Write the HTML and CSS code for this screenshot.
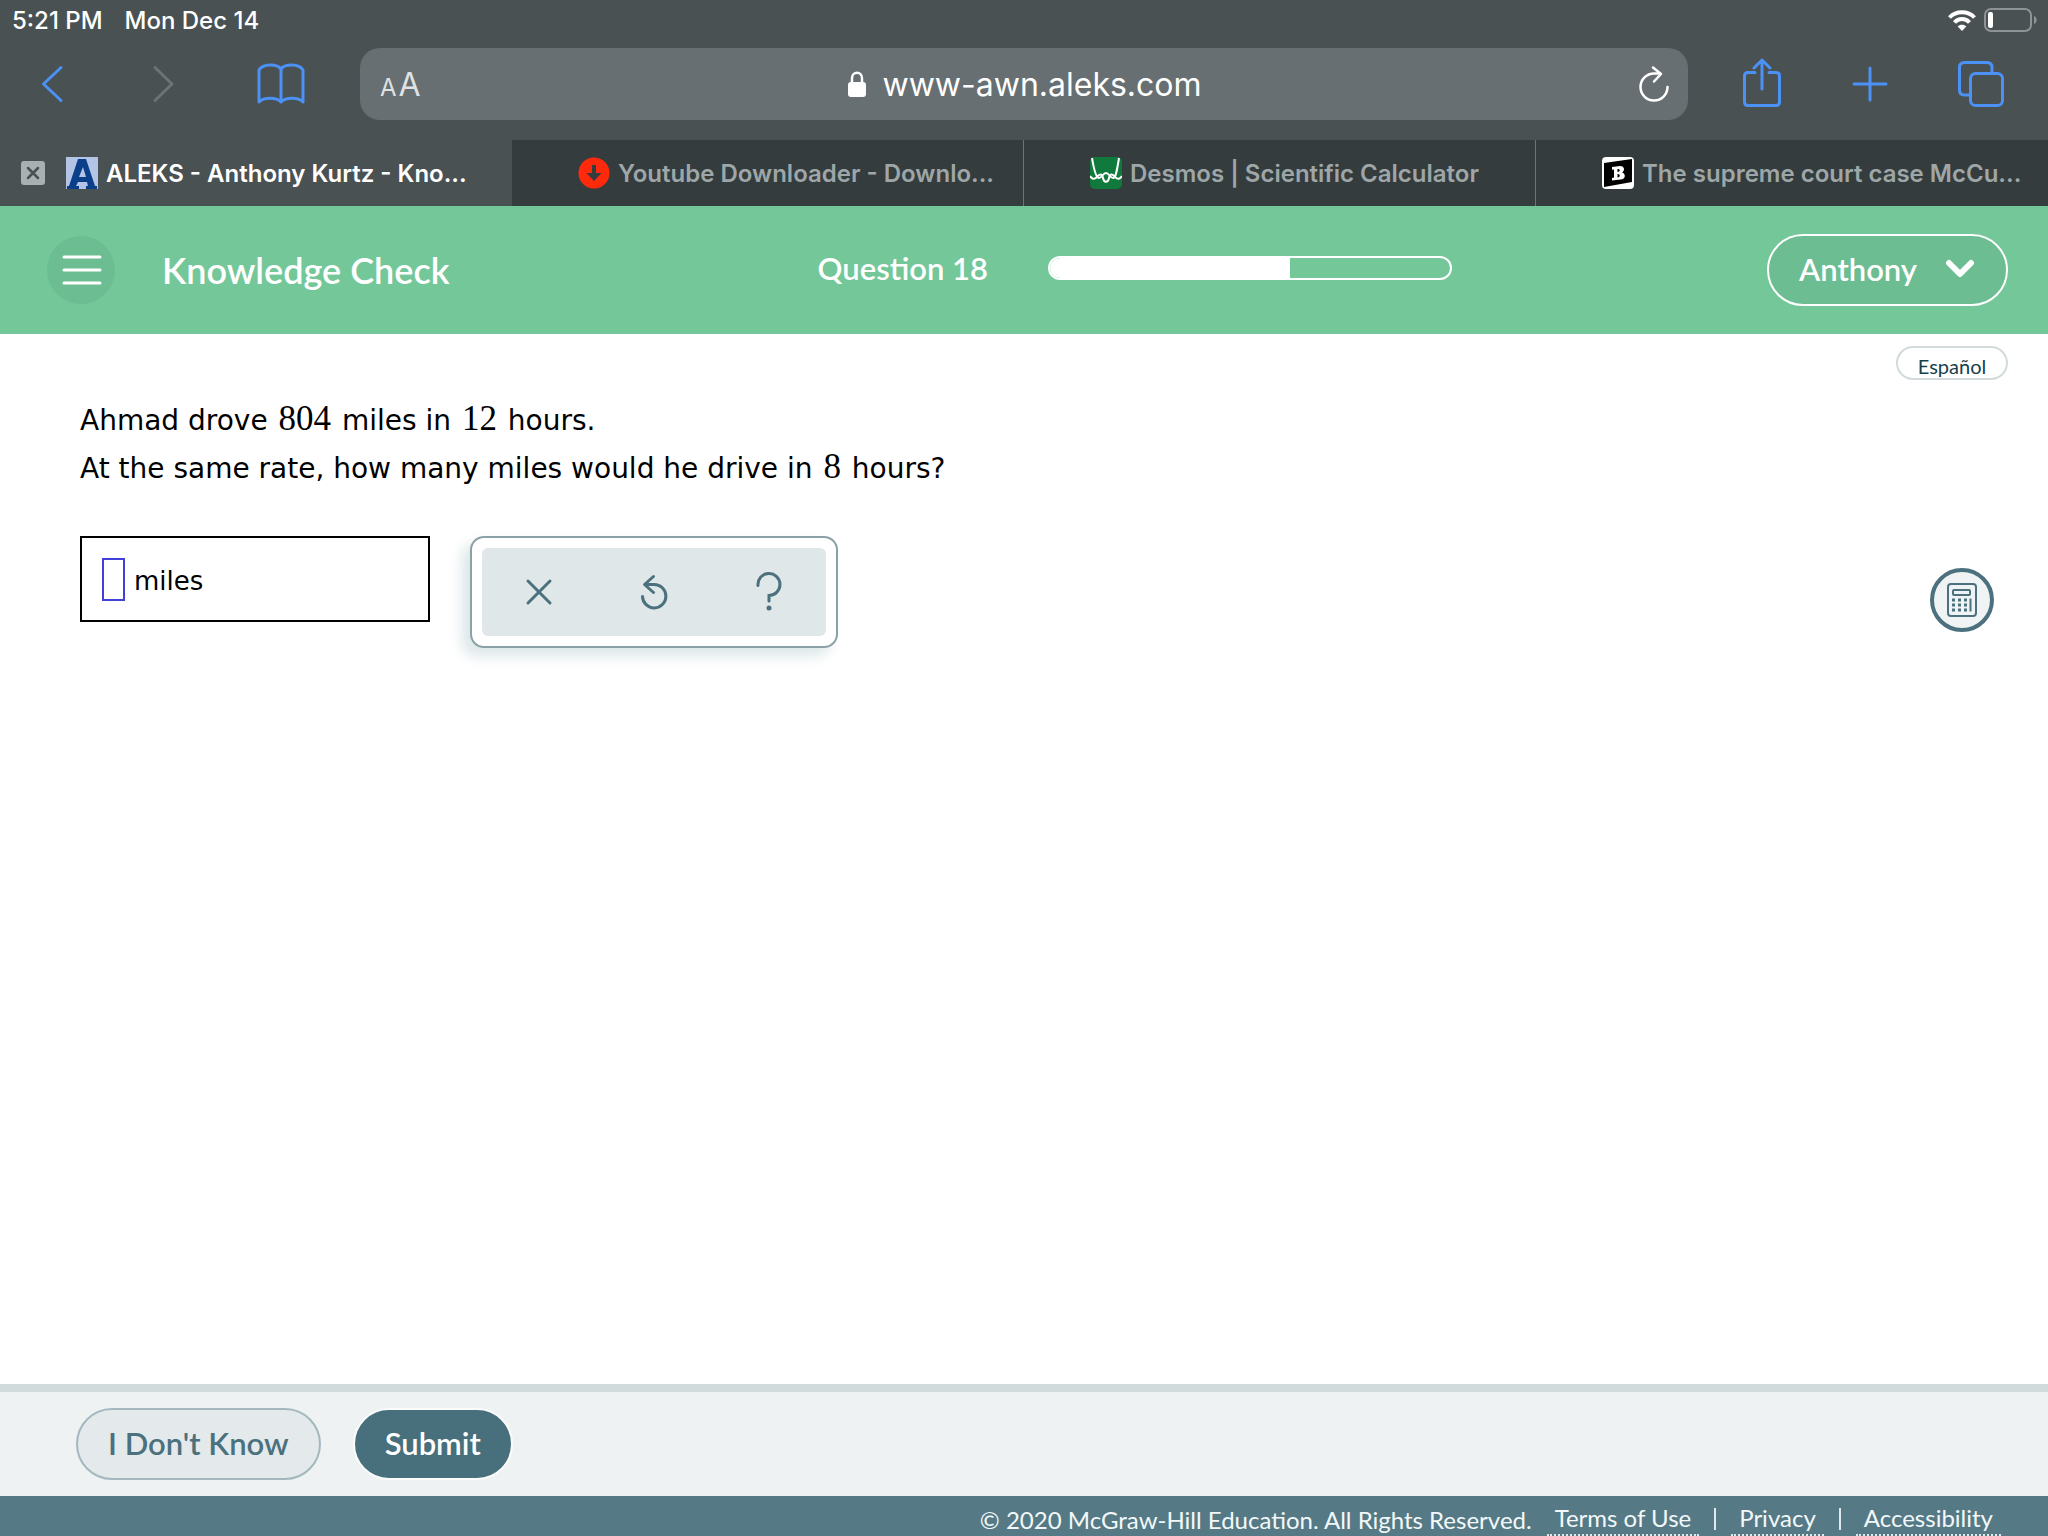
FILE: index.html
```html
<!DOCTYPE html>
<html lang="en">
<head>
<meta charset="utf-8">
<meta name="viewport" content="width=device-width, initial-scale=1">
<title>ALEKS - Anthony Kurtz - Knowledge Check</title>
<link rel="stylesheet" href="styles.css">
</head>
<body>
<div class="browser">
  <div class="status">
    <span>5:21 PM</span>
    <span>Mon Dec 14</span>
    <span class="status-icons">
      <svg width="28" height="22" viewBox="0 0 28 22" fill="none" stroke="#fff" stroke-width="4"><path d="M1.500 8.500C8 1.500 20 1.500 26.500 8.500"/><path d="M6.500 13.500c4-4.600 11-4.600 15 0"/><path d="M9.700 17.500c2-2.500 6.600-2.500 8.600 0L14 22z" fill="#fff" stroke="none"/></svg>
      <svg width="54" height="24" viewBox="0 0 54 24"><rect x="1" y="1" width="46" height="22" rx="6" fill="none" stroke="#8e9395" stroke-width="2"/><rect x="4" y="4" width="5" height="16" rx="2" fill="#fff"/><path d="M50 8c3.500 1 3.500 7 0 8z" fill="#8e9395"/></svg>
    </span>
  </div>
  <div class="toolbar">
    <div class="nav-left">
      <button class="icon-btn" aria-label="Back"><svg width="24" height="40" viewBox="0 0 24 40" fill="none" stroke="#4c91f5" stroke-width="3" stroke-linecap="round" stroke-linejoin="round"><path d="M21 3.500 3.500 20 21 36.500"/></svg></button>
      <button class="icon-btn" aria-label="Forward"><svg width="24" height="40" viewBox="0 0 24 40" fill="none" stroke="#6c7275" stroke-width="3" stroke-linecap="round" stroke-linejoin="round"><path d="M4 3.500 21 20 4 36.500"/></svg></button>
      <button class="icon-btn" aria-label="Bookmarks"><svg width="48" height="42" viewBox="0 0 48 42" fill="none" stroke="#4c91f5" stroke-width="3" stroke-linejoin="round"><path d="M2 39V7C6 .500 20 .500 24 6c4-5.500 18-5.500 22 1v32c-5-5-17-5-22 0-5-5-17-5-22 0z"/><path d="M24 6v33"/></svg></button>
    </div>
    <div class="address">
      <button class="text-size" aria-label="Text size"><span class="small-a">A</span><span>A</span></button>
      <a class="url" href="#"><svg width="18" height="26" viewBox="0 0 18 26"><rect y="11" width="18" height="15" rx="3" fill="#fff"/><path d="M4 12V7c0-7 10-7 10 0v5" fill="none" stroke="#fff" stroke-width="2.500"/></svg>www-awn.aleks.com</a>
      <button class="icon-btn reload" aria-label="Reload"><svg width="32" height="38" viewBox="0 0 32 38" fill="none" stroke="#fff" stroke-width="2.500" stroke-linecap="round" stroke-linejoin="round"><path d="M29.500 22A13.500 13.500 0 1 1 16 8.500h6"/><path d="m15 2.500 8 6.500-7 7.500"/></svg></button>
    </div>
    <div class="nav-right">
      <button class="icon-btn" aria-label="Share"><svg width="38" height="52" viewBox="0 0 38 52" fill="none" stroke="#4c91f5" stroke-width="3" stroke-linecap="round" stroke-linejoin="round"><path d="M12 14.500H5q-3.500 0-3.500 3.500v26q0 3.500 3.500 3.500h28q3.500 0 3.500-3.500V18q0-3.500-3.500-3.500h-7M19 31V2M11 10l8-8 8 8"/></svg></button>
      <button class="icon-btn" aria-label="New tab"><svg width="36" height="36" viewBox="0 0 36 36" stroke="#4c91f5" stroke-width="3" stroke-linecap="round"><path d="M18 2v32M2 18h32"/></svg></button>
      <button class="icon-btn" aria-label="Show tabs"><svg width="46" height="46" viewBox="0 0 46 46" fill="none" stroke="#4c91f5" stroke-width="3"><rect x="12.500" y="12.500" width="32" height="32" rx="5"/><path d="M12 34H6.500q-5 0-5-5V6.500q0-5 5-5H29q5 0 5 5V12"/></svg></button>
    </div>
  </div>
  <div class="tabs">
    <div class="tab active">
      <button class="icon-btn close" aria-label="Close tab"><svg width="24" height="24" viewBox="0 0 24 24"><rect width="24" height="24" rx="3" fill="#a8b0b2"/><path d="m7 7 10 10M17 7 7 17" stroke="#495153" stroke-width="2.500" stroke-linecap="round"/></svg></button>
      <svg width="32" height="32" viewBox="0 0 32 32"><rect width="32" height="32" fill="#b3c4e6"/><path d="M1 32v-3h2L12 2h8l9 27h2v3H20v-3h2l-1-4h-9l-2 4h3v3zm12-12h7l-3-10z" fill="#0b3f8a" fill-rule="evenodd"/></svg>
      <span>ALEKS - Anthony Kurtz - Kno...</span>
    </div>
    <div class="tab">
      <svg width="32" height="32" viewBox="0 0 32 32"><circle cx="16" cy="16" r="15.500" fill="#ff2a0c"/><path d="M14 8h4v8h5.500L16 24l-7.500-8H14z" fill="#343c3e"/></svg>
      <span>Youtube Downloader - Downlo...</span>
    </div>
    <div class="tab">
      <svg width="32" height="32" viewBox="0 0 32 32"><rect width="32" height="32" rx="5" fill="#107a3c"/><path d="M2 1c2 12 4 20 7 20s4-5 7-5 4 5 7 5 4-8 6-20M0 19c2 3 4 4 7 1 3-4 5-3 6 1 1 5 5 5 6 0 1-4 3-5 6-1 3 3 5 2 7-1" fill="none" stroke="#fff" stroke-width="2"/></svg>
      <span>Desmos | Scientific Calculator</span>
    </div>
    <div class="tab">
      <svg width="32" height="32" viewBox="0 0 32 32"><rect width="32" height="32" rx="4" fill="#fff"/><path d="m2 6 28-4v23L2 30z"/><path d="m10 10 8-1c5 0 5 5 2 6.500 4 1 4 7-1.500 7L10 23.500V21l2-.500V12.500l-2 .200zm5.500 2v3c3-.200 3-3.200 0-3zm0 5v3.500c3-.200 3-3.700 0-3.500z" fill="#fff" fill-rule="evenodd"/></svg>
      <span>The supreme court case McCu...</span>
    </div>
  </div>
</div>

<header class="header">
  <button class="menu" aria-label="Menu"><svg width="40" height="30" viewBox="0 0 40 30" stroke="#fff" stroke-width="3" stroke-linecap="round"><path d="M2 2h36M2 15h36M2 28h36"/></svg></button>
  <h1 class="title">Knowledge Check</h1>
  <div class="status-group">
    <span class="question-no">Question 18</span>
    <div class="progress" role="progressbar" aria-label="Progress" aria-valuenow="60" aria-valuemin="0" aria-valuemax="100"><div class="progress-fill" style="width:60%"></div></div>
  </div>
  <button class="user">Anthony <svg width="30" height="20" viewBox="0 0 30 20" fill="none" stroke="#fff" stroke-width="6" stroke-linecap="round" stroke-linejoin="round"><path d="m4 4 11 11L26 4"/></svg></button>
</header>

<main class="content">
  <div class="language-row"><button class="language">Español</button></div>
  <div class="problem">
    <p>Ahmad drove <span class="num">804</span> miles in <span class="num">12</span> hours.</p>
    <p>At the same rate, how many miles would he drive in <span class="num">8</span> hours?</p>
  </div>
  <div class="work">
    <label class="answer"><input class="blank" type="text" aria-label="Answer in miles"><span class="unit">miles</span></label>
    <div class="palette">
      <div class="palette-inner">
        <button class="icon-btn" aria-label="Clear"><svg width="28" height="40" viewBox="0 0 28 40" stroke="#4a717d" stroke-width="3" stroke-linecap="round"><path d="m3 9 22 22M25 9 3 31"/></svg></button>
        <button class="icon-btn" aria-label="Undo"><svg width="28" height="40" viewBox="0 0 28 40" fill="none" stroke="#4a717d" stroke-width="3" stroke-linecap="round" stroke-linejoin="round"><path d="M2.500 24.500A11.700 11.700 0 1 0 14 12.500H5M13.500 4.500 4.500 12.500l9 8"/></svg></button>
        <button class="icon-btn" aria-label="Help"><svg width="28" height="40" viewBox="0 0 28 40" fill="none" stroke="#4a717d" stroke-width="3" stroke-linecap="round"><path d="M3 13.500A11 11 0 1 1 14 23.500V29"/><circle cx="14" cy="36" r="2.500" fill="#4a717d" stroke="none"/></svg></button>
      </div>
    </div>
    <button class="calculator" aria-label="Calculator"><svg width="30" height="34" viewBox="0 0 30 34" fill="none" stroke="#4a717d" stroke-width="2"><rect x="1" y="1" width="28" height="32" rx="3"/><rect x="6" y="7" width="17" height="5" rx="1"/><path d="M5 17h15M5 22h15M5 27h15" stroke-width="3" stroke-dasharray="3 3"/><path d="M23.500 15.500v13"/></svg></button>
  </div>
</main>

<div class="actions">
  <button class="pill pill-light">I Don't Know</button>
  <button class="pill pill-dark">Submit</button>
</div>
<footer class="footer">
  <span>© 2020 McGraw-Hill Education. All Rights Reserved.</span>
  <nav class="links"><a href="#">Terms of Use</a><span class="bar"></span><a href="#">Privacy</a><span class="bar"></span><a href="#">Accessibility</a></nav>
</footer>
</body>
</html>
```
FILE: styles.css
```css
* { box-sizing: border-box; }
body {
  margin: 0;
  min-height: 100vh;
  display: flex;
  flex-direction: column;
  background: #fff;
  font-family: Lato, "Open Sans", sans-serif;
}
button { font: inherit; padding: 0; border: 0; background: none; color: inherit; cursor: pointer; }
svg { display: block; flex: none; }
.icon-btn { display: flex; align-items: center; justify-content: center; }

/* Browser chrome */
.browser { background: #495153; color: #fff; font-family: Inter, "Liberation Sans", sans-serif; }
.status {
  display: flex;
  align-items: center;
  gap: 22px;
  height: 40px;
  padding: 0 10px 0 12px;
  font-size: 24px;
  font-weight: 500;
}
.status-icons { display: flex; align-items: center; gap: 8px; margin-left: auto; }
.toolbar { display: flex; align-items: center; padding: 8px 0 20px; }
.nav-left { display: grid; grid-template-columns: 104px 118px 138px; align-items: center; }
.nav-left .icon-btn:last-child { padding-right: 20px; }
.nav-right { display: grid; grid-template-columns: 108px 108px 114px; align-items: center; padding: 0 10px 0 20px; }
.address {
  flex: 1;
  display: grid;
  grid-template-columns: 1fr auto 1fr;
  align-items: center;
  height: 72px;
  padding: 0 18px 0 20px;
  border-radius: 20px;
  background: #686f72;
}
.text-size { display: flex; align-items: baseline; gap: 2px; justify-self: start; color: #dfe2e3; font-size: 32px; }
.small-a { font-size: 24px; }
.url { display: flex; align-items: center; gap: 16px; color: #fff; font-size: 32px; text-decoration: none; }
.reload { justify-self: end; }
.tabs { display: grid; grid-template-columns: repeat(4, 1fr); height: 66px; }
.tab {
  display: flex;
  align-items: center;
  gap: 8px;
  padding-left: 66px;
  border-right: 1px solid #6c7476;
  background: #343c3e;
  color: #9ea6a8;
  font-size: 24px;
  font-weight: 600;
  white-space: nowrap;
  overflow: hidden;
}
.tab:last-child { border-right: 0; }
.tab.active { padding-left: 21px; border-right: 0; background: #495153; color: #fff; }
.close { margin-right: 13px; }

/* Header */
.header {
  display: flex;
  align-items: center;
  height: 128px;
  padding: 0 40px 0 47px;
  background: #74c799;
  color: #fff;
}
.menu { display: flex; align-items: center; justify-content: center; width: 68px; height: 68px; padding-left: 2px; border-radius: 50%; background: #6dbd92; }
.title { flex: 1; margin: 0 0 0 47px; font-size: 36px; font-weight: 600; }
.status-group { display: flex; align-items: center; gap: 60px; padding-bottom: 4px; }
.question-no { font-size: 31px; font-weight: 600; }
.progress { width: 404px; height: 24px; border: 2px solid #fff; border-radius: 12px; overflow: hidden; }
.progress-fill { height: 100%; background: #fff; }
.user {
  display: flex;
  align-items: center;
  justify-content: space-between;
  width: 241px;
  height: 72px;
  margin-left: 315px;
  padding: 0 31px 2px 30px;
  border: 2px solid #fff;
  border-radius: 36px;
  background: #6dbd92;
  font-size: 31px;
  font-weight: 600;
}

/* Question */
.content { flex: 1; padding: 12px 40px 0 80px; color: #000; font-family: "DejaVu Sans", Verdana, sans-serif; }
.language-row { display: flex; justify-content: flex-end; }
.language {
  width: 112px;
  height: 34px;
  padding-top: 6px;
  border: 2px solid #d3dadb;
  border-radius: 17px;
  color: #173f4a;
  font: 20px/24px Lato, sans-serif;
}
.problem { margin-top: 17px; font-size: 28px; line-height: 48px; }
.problem p { margin: 0; }
.num { padding: 0 2px; font-family: "Liberation Serif", serif; font-size: 35px; line-height: 1; }
.work { display: flex; align-items: flex-start; margin-top: 43px; }
.answer {
  display: flex;
  align-items: center;
  gap: 9px;
  width: 350px;
  height: 86px;
  padding: 0 20px;
  border: 2px solid #000;
  font-size: 26px;
}
.unit { padding-top: 3px; }
.blank { width: 23px; height: 43px; padding: 0; border: 2px solid #4040d8; border-radius: 0; background: #fff; font: inherit; }
.palette {
  width: 368px;
  margin-left: 40px;
  padding: 10px;
  border: 2px solid #8ba1a6;
  border-radius: 14px;
  background: #fff;
  box-shadow: -8px 8px 14px #dce6e8;
}
.palette-inner { display: grid; grid-template-columns: repeat(3, 1fr); height: 88px; border-radius: 6px; background: #dfe7e8; }
.calculator {
  display: flex;
  align-items: center;
  justify-content: center;
  width: 64px;
  height: 64px;
  margin: 32px 14px 0 auto;
  border: 4px solid #4a717d;
  border-radius: 50%;
  background: #eff3f4;
}

/* Actions and footer */
.actions { display: flex; gap: 32px; padding: 16px 76px; border-top: 8px solid #d2dbdc; background: #eef2f3; }
.pill { height: 72px; padding: 0 30px 2px; border: 2px solid #a3b8be; border-radius: 36px; font-size: 31px; font-weight: 600; }
.pill-light { background: #e4e9eb; color: #4a717d; }
.pill-dark { border-color: #fafcfc; background: #476f7c; color: #fff; }
.footer {
  display: flex;
  align-items: flex-end;
  justify-content: flex-end;
  gap: 15px;
  height: 40px;
  padding-right: 47px;
  background: #567a85;
  color: #f2f8f9;
  font-size: 24px;
  line-height: 32px;
}
.links { display: flex; align-items: center; gap: 15px; }
.links a { padding: 0 8px; border-bottom: 2px dotted #dfe8ea; color: inherit; text-decoration: none; }
.bar { width: 2px; height: 22px; background: #dfe8ea; }
```
